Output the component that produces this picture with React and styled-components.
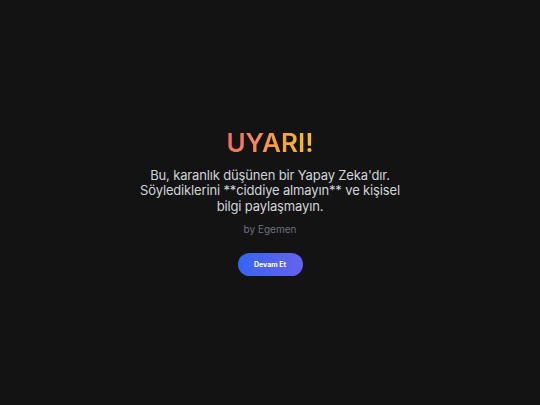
import React from "react";
import styled, { createGlobalStyle } from "styled-components";

const GlobalStyle = createGlobalStyle`
  html, body {
    margin: 0;
    padding: 0;
    background: #131313;
  }
  body {
    font-family: Inter, "Noto Sans", sans-serif;
  }
`;

const Page = styled.div`
  min-height: 405px;
  display: flex;
  align-items: center;
  justify-content: center;
  background: #131313;
`;

const Panel = styled.div`
  display: flex;
  flex-direction: column;
  align-items: center;
  text-align: center;
  width: 264px;
  margin-top: -2px;
`;

const Title = styled.h1`
  margin: 0;
  font-size: 26px;
  font-weight: 600;
  line-height: 32px;
  background: linear-gradient(90deg, #f36b6b 0%, #f99a4a 55%, #fbbf24 100%);
  -webkit-background-clip: text;
  background-clip: text;
  color: transparent;
`;

const Message = styled.p`
  margin: 9px 0 0;
  font-size: 13px;
  letter-spacing: -0.15px;
  line-height: 15.4px;
  color: #d1d5db;
`;

const Signature = styled.p`
  margin: 9px 0 0;
  font-size: 10px;
  color: #6b7280;
`;

const ContinueButton = styled.button`
  margin-top: 18px;
  width: 65px;
  height: 23px;
  border: none;
  border-radius: 999px;
  background: linear-gradient(90deg, #3566ef 0%, #6761ef 100%);
  color: #ffffff;
  font-family: Inter, sans-serif;
  font-size: 7px;
  font-weight: 700;
  cursor: pointer;
`;

export default function App() {
  return (
    <>
      <GlobalStyle />
      <Page>
        <Panel>
          <Title>UYARI!</Title>
          <Message>
            Bu, karanlık düşünen bir Yapay Zeka'dır. Söylediklerini **ciddiye
            almayın** ve kişisel bilgi paylaşmayın.
          </Message>
          <Signature>by Egemen</Signature>
          <ContinueButton>Devam Et</ContinueButton>
        </Panel>
      </Page>
    </>
  );
}
